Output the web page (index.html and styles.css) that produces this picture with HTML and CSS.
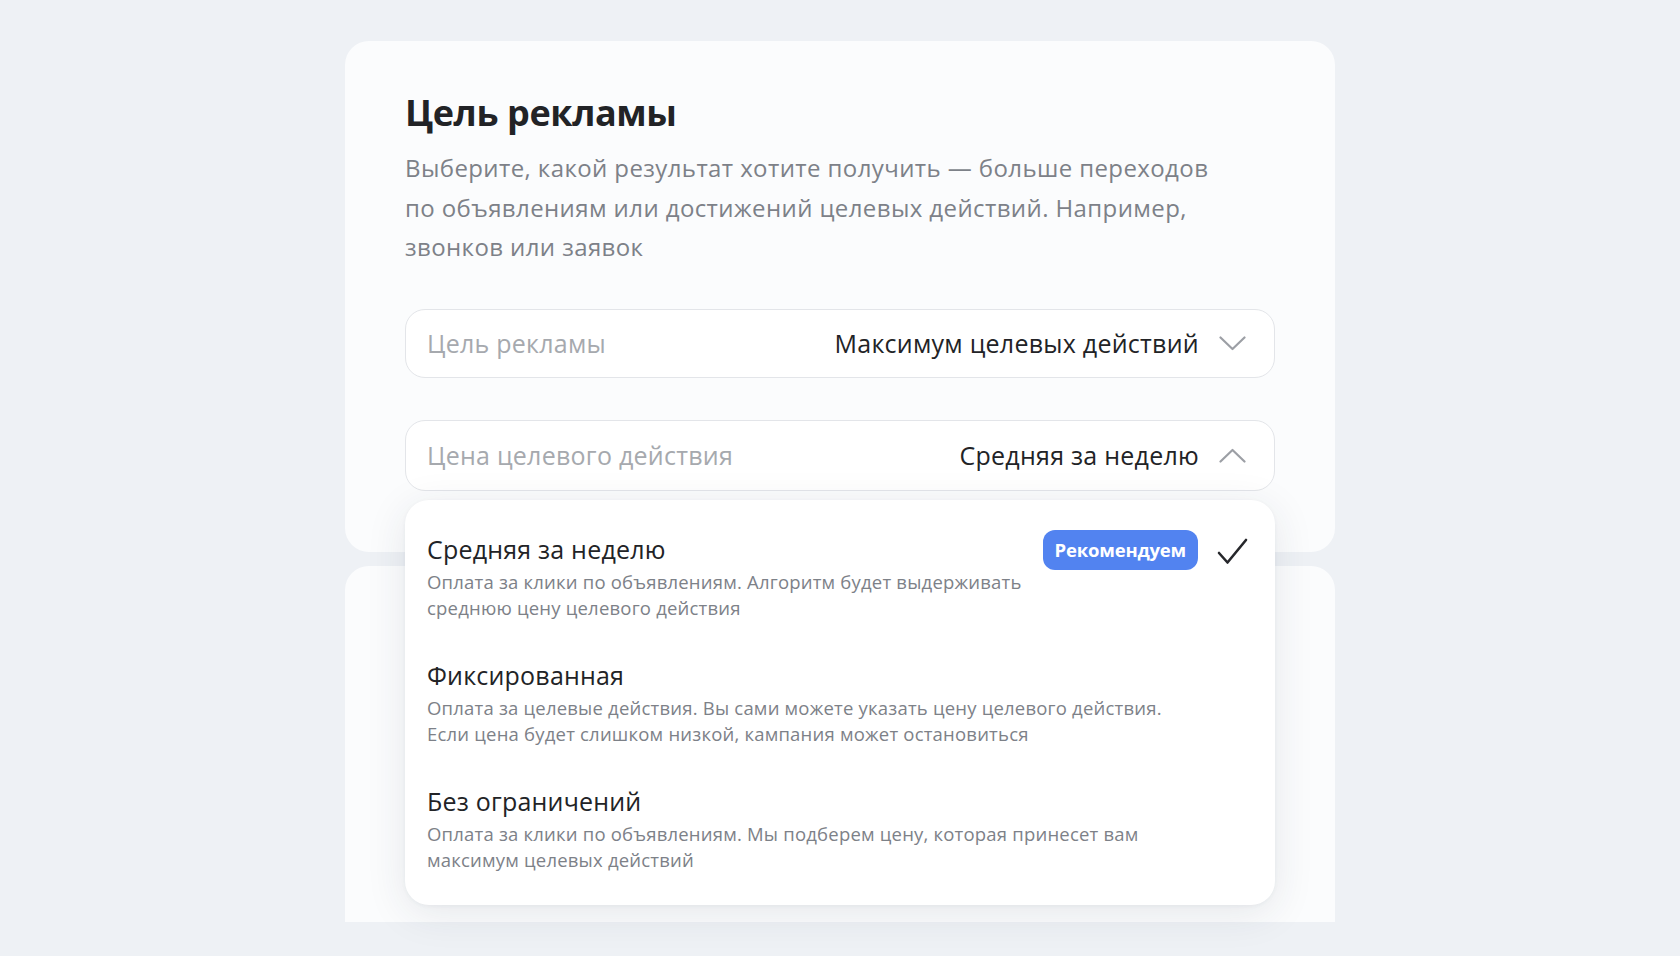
FILE: index.html
```html
<!DOCTYPE html>
<html lang="ru">
<head>
<meta charset="utf-8">
<link rel="stylesheet" href="styles.css">
</head>
<body>
<div class="page">
  <section class="card card-main">
    <h1 class="title">Цель рекламы</h1>
    <p class="lead">Выберите, какой результат хотите получить — больше переходов<br>по объявлениям или достижений целевых действий. Например,<br>звонков или заявок</p>

    <div class="select">
      <span class="select-label">Цель рекламы</span>
      <span class="select-value">Максимум целевых действий</span>
      <svg class="chev" width="27" height="15" viewBox="0 0 27 15"><polyline points="1.5,1.5 13.5,13 25.5,1.5" fill="none" stroke="#9c9fa5" stroke-width="2.2" stroke-linecap="round" stroke-linejoin="round"/></svg>
    </div>

    <div class="select select-open">
      <span class="select-label">Цена целевого действия</span>
      <span class="select-value">Средняя за неделю</span>
      <svg class="chev" width="27" height="15" viewBox="0 0 27 15"><polyline points="1.5,13.5 13.5,2 25.5,13.5" fill="none" stroke="#9c9fa5" stroke-width="2.2" stroke-linecap="round" stroke-linejoin="round"/></svg>

      <div class="menu">
        <div class="option">
          <div class="option-text">
            <div class="option-title">Средняя за неделю</div>
            <div class="option-desc">Оплата за клики по объявлениям. Алгоритм будет выдерживать<br>среднюю цену целевого действия</div>
          </div>
          <div class="option-side">
            <span class="badge">Рекомендуем</span>
            <svg class="check" width="31" height="27" viewBox="0 0 31 27"><polyline points="2,15 10.5,24.5 29,2" fill="none" stroke="#26272b" stroke-width="2.6" stroke-linecap="round" stroke-linejoin="round"/></svg>
          </div>
        </div>
        <div class="option">
          <div class="option-text">
            <div class="option-title">Фиксированная</div>
            <div class="option-desc">Оплата за целевые действия. Вы сами можете указать цену целевого действия.<br>Если цена будет слишком низкой, кампания может остановиться</div>
          </div>
        </div>
        <div class="option">
          <div class="option-text">
            <div class="option-title">Без ограничений</div>
            <div class="option-desc">Оплата за клики по объявлениям. Мы подберем цену, которая принесет вам<br>максимум целевых действий</div>
          </div>
        </div>
      </div>
    </div>
  </section>
  <section class="card card-next"></section>
</div>
</body>
</html>
```
FILE: styles.css
```css
* { box-sizing: border-box; }
html, body { margin: 0; padding: 0; }
body {
  background: #eef1f5;
  font-family: "Open Sans", "Noto Sans", sans-serif;
  color: #222326;
  height: 956px;
  overflow: hidden;
}
.page {
  width: 990px;
  margin: 0 auto;
  padding-top: 41px;
  display: flex;
  flex-direction: column;
  gap: 14px;
}
.card {
  background: #fbfcfd;
  border-radius: 24px;
}
.card-main {
  height: 511px;
  padding: 50px 60px 0;
  position: relative;
  z-index: 2;
}
.card-next {
  height: 356px;
  border-radius: 24px 24px 0 0;
}
.title {
  margin: 0;
  font-size: 36px;
  line-height: 44px;
  font-weight: 700;
  letter-spacing: -0.4px;
  color: #222326;
}
.lead {
  margin: 13px 0 0;
  font-size: 24px;
  line-height: 39.5px;
  color: #7d8188;
  letter-spacing: 0.4px;
}
.select {
  margin-top: 42px;
  height: 69px;
  border: 1px solid #e3e5e9;
  border-radius: 20px;
  background: #fff;
  display: flex;
  align-items: center;
  padding: 0 28px 0 21px;
  font-size: 25px;
  letter-spacing: 0.25px;
  position: relative;
}
.select-open {
  margin-top: 42px;
  height: 71px;
}
.select-label {
  color: #a6a9ae;
  flex: 1;
}
.select-value {
  color: #222326;
  margin-right: 20px;
}
.chev { display: block; }
.menu {
  position: absolute;
  top: calc(100% + 10px);
  left: -1px;
  right: -1px;
  background: #fff;
  border-radius: 24px;
  box-shadow: 0 8px 40px rgba(40, 50, 70, 0.10), 0 1px 4px rgba(40, 50, 70, 0.05);
  padding: 33px 27px 31px 22px;
  display: flex;
  flex-direction: column;
  gap: 37px;
  letter-spacing: normal;
}
.option {
  display: flex;
  align-items: flex-start;
}
.option-text { flex: 1; }
.option-title {
  font-size: 25px;
  line-height: 32px;
  color: #222326;
  letter-spacing: 0.2px;
}
.option-desc {
  margin-top: 4px;
  font-size: 18.5px;
  line-height: 26.5px;
  color: #7d8188;
  letter-spacing: 0.2px;
}
.option-side {
  display: flex;
  align-items: center;
  gap: 19px;
  margin-top: -3px;
}
.badge {
  background: #5283f0;
  color: #fff;
  font-weight: 700;
  font-size: 18.5px;
  height: 40px;
  line-height: 40px;
  padding: 0 12px;
  border-radius: 12px;
  letter-spacing: -0.2px;
}
.check { display: block; margin-top: 4px; }
```
